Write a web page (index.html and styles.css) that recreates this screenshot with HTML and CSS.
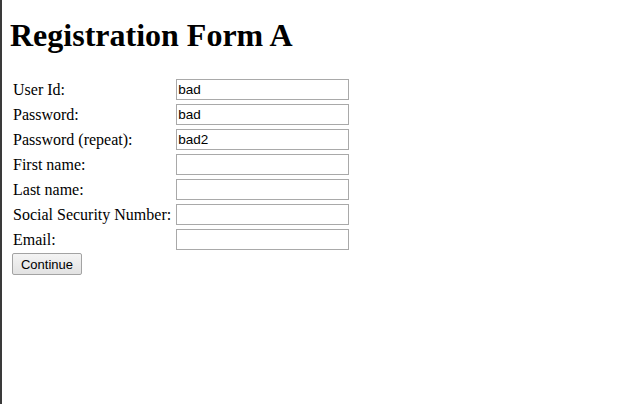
FILE: index.html
```html
<!DOCTYPE html>
<html>
<head>
<meta charset="utf-8">
<title>Registration Form A</title>
<link rel="stylesheet" href="styles.css">
</head>
<body>
<h1 class="title">Registration Form A</h1>
<form class="reg-form">
<table class="form-table">
<tr><td class="label">User Id:</td><td><input class="field" type="text" value="bad"></td></tr>
<tr><td class="label">Password:</td><td><input class="field" type="text" value="bad"></td></tr>
<tr><td class="label">Password (repeat):</td><td><input class="field" type="text" value="bad2"></td></tr>
<tr><td class="label">First name:</td><td><input class="field" type="text" value=""></td></tr>
<tr><td class="label">Last name:</td><td><input class="field" type="text" value=""></td></tr>
<tr><td class="label">Social Security Number:</td><td><input class="field" type="text" value=""></td></tr>
<tr><td class="label">Email:</td><td><input class="field" type="text" value=""></td></tr>
<tr><td class="actions" colspan="2"><button class="btn" type="button">Continue</button></td></tr>
</table>
</form>
</body>
</html>
```
FILE: styles.css
```css
html {
  background: #fff;
  border-left: 2px solid #3a3a3a;
  min-height: 100%;
}
body {
  margin: 8px;
  font-family: "Liberation Serif", "Times New Roman", serif;
  font-size: 16px;
  color: #000;
}
.title {
  font-size: 32px;
  font-weight: bold;
  margin: 9px 0 22px;
  line-height: 37px;
}
.reg-form {
  margin: 0;
}
.form-table {
  border-collapse: separate;
  border-spacing: 2px;
  margin-left: 0;
}
.form-table td {
  padding: 1px;
  height: 21px;
  vertical-align: middle;
}
.form-table td.label {
  white-space: nowrap;
  padding-right: 2px;
}
.field {
  box-sizing: border-box;
  width: 173px;
  height: 21px;
  border: 1px solid #a9a9a9;
  padding: 0 1px;
  margin: 0;
  font-family: "Liberation Sans", Arial, sans-serif;
  font-size: 13.5px;
  color: #000;
  background: #fff;
}
.form-table td.actions {
  padding: 0;
}
.btn {
  box-sizing: border-box;
  height: 22px;
  width: 70px;
  margin: 0;
  padding: 0 6px;
  font-family: "Liberation Sans", Arial, sans-serif;
  font-size: 13px;
  color: #000;
  background: linear-gradient(#f4f4f4, #e2e2e2);
  border: 1px solid #a3a3a3;
  border-radius: 2px;
}
```
